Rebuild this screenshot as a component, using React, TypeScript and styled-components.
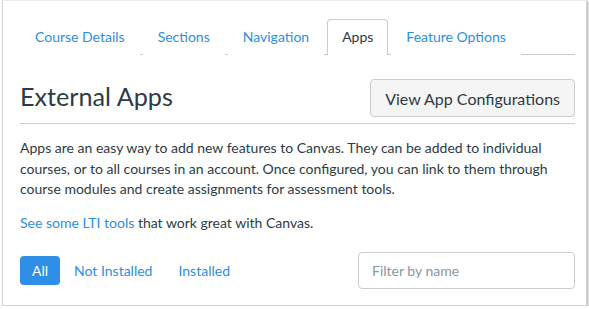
import React from "react";
import styled, { createGlobalStyle } from "styled-components";

const Global = createGlobalStyle`
  html, body { margin: 0; padding: 0; background: #ffffff; }
  body { font-family: Lato, "Helvetica Neue", Arial, sans-serif; color: #2d3b45; }
  * { box-sizing: border-box; }
`;

const Frame = styled.div`
  margin: 0 0 0 2px;
  width: 585px;
  height: 306px;
  border: 1px solid #d4d4d4;
  border-top-color: #ececec;
  box-shadow: 1px 1px 2px rgba(0, 0, 0, 0.35);
  background: #fff;
  padding: 18px 11px 0 17px;
`;

const TabBar = styled.div`
  display: flex;
  gap: 3px;
  height: 36px;
  border-bottom: 1px solid #c7cdd1;
`;

const Tab = styled.div<{ $active?: boolean }>`
  display: flex;
  align-items: center;
  padding: 0 14px 2px 14px;
  font-size: 14px;
  color: ${(p) => (p.$active ? "#2d3b45" : "#2d8ee3")};
  background: #fff;
  border: 1px solid ${(p) => (p.$active ? "#c7cdd1" : "transparent")};
  border-bottom: none;
  border-radius: 4px 4px 0 0;
  height: 36px;
`;

const HeaderRow = styled.div`
  display: flex;
  align-items: center;
  justify-content: space-between;
  height: 69px;
  padding-top: 18px;
  border-bottom: 1px solid #c7cdd1;
`;

const Title = styled.h1`
  margin: 0 0 3px 0;
  font-size: 25.2px;
  font-weight: 400;
  color: #2d3b45;
  line-height: 1;
`;

const ConfigButton = styled.button`
  height: 38px;
  padding: 0 14px;
  font-family: Lato, sans-serif;
  font-size: 16px;
  color: #2d3b45;
  background: #f5f5f5;
  border: 1px solid #c7cdd1;
  border-radius: 4px;
`;

const Paragraph = styled.p<{ $gap: number }>`
  margin: ${(p) => p.$gap}px 0 0 0;
  font-size: 14px;
  line-height: 20.5px;
  color: #2d3b45;
`;

const Link = styled.a`
  color: #2d8ee3;
  text-decoration: none;
`;

const FilterRow = styled.div`
  display: flex;
  align-items: center;
  justify-content: space-between;
  margin-top: 19px;
`;

const Pills = styled.div`
  display: flex;
  gap: 2px;
`;

const Pill = styled.div<{ $active?: boolean }>`
  display: flex;
  align-items: center;
  height: 29px;
  padding: 0 12px;
  border-radius: 4px;
  font-size: 14px;
  color: ${(p) => (p.$active ? "#fff" : "#2d8ee3")};
  background: ${(p) => (p.$active ? "#2f8fe6" : "transparent")};
`;

const Filter = styled.input`
  width: 217px;
  height: 37px;
  padding: 0 13px;
  font-family: Lato, sans-serif;
  font-size: 14px;
  color: #2d3b45;
  border: 1px solid #c7cdd1;
  border-radius: 4px;
  outline: none;
  &::placeholder { color: #8b969e; }
`;

export default function App() {
  return (
    <>
      <Global />
      <Frame>
        <TabBar>
          <Tab>Course Details</Tab>
          <Tab>Sections</Tab>
          <Tab>Navigation</Tab>
          <Tab $active>Apps</Tab>
          <Tab>Feature Options</Tab>
        </TabBar>
        <HeaderRow>
          <Title>External Apps</Title>
          <ConfigButton>View App Configurations</ConfigButton>
        </HeaderRow>
        <Paragraph $gap={14}>
          Apps are an easy way to add new features to Canvas. They can be added to individual
          courses, or to all courses in an account. Once configured, you can link to them through
          course modules and create assignments for assessment tools.
        </Paragraph>
        <Paragraph $gap={13}>
          <Link href="#">See some LTI tools</Link> that work great with Canvas.
        </Paragraph>
        <FilterRow>
          <Pills>
            <Pill $active>All</Pill>
            <Pill>Not Installed</Pill>
            <Pill>Installed</Pill>
          </Pills>
          <Filter placeholder="Filter by name" />
        </FilterRow>
      </Frame>
    </>
  );
}
